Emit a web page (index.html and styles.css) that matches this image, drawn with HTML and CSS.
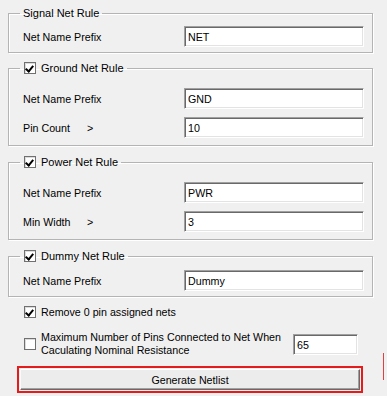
FILE: index.html
```html
<!DOCTYPE html>
<html lang="en">
<head>
    <meta charset="UTF-8">
    <title>Netlist Options</title>
    <link rel="stylesheet" href="styles.css">
</head>
<body>
    <div class="dialog">
        <fieldset class="group group-signal">
            <legend>Signal Net Rule</legend>
            <div class="field">
                <label>Net Name Prefix</label>
                <input type="text" class="text-box" value="NET">
            </div>
        </fieldset>

        <fieldset class="group group-tall">
            <legend><span class="check on"></span>Ground Net Rule</legend>
            <div class="field">
                <label>Net Name Prefix</label>
                <input type="text" class="text-box" value="GND">
            </div>
            <div class="field">
                <label><span class="name">Pin Count</span>&gt;</label>
                <input type="text" class="text-box" value="10">
            </div>
        </fieldset>

        <fieldset class="group group-tall">
            <legend><span class="check on"></span>Power Net Rule</legend>
            <div class="field">
                <label>Net Name Prefix</label>
                <input type="text" class="text-box" value="PWR">
            </div>
            <div class="field">
                <label><span class="name">Min Width</span>&gt;</label>
                <input type="text" class="text-box" value="3">
            </div>
        </fieldset>

        <fieldset class="group group-dummy">
            <legend><span class="check on"></span>Dummy Net Rule</legend>
            <div class="field">
                <label>Net Name Prefix</label>
                <input type="text" class="text-box" value="Dummy">
            </div>
        </fieldset>

        <div class="option">
            <span class="check on"></span>Remove 0 pin assigned nets
        </div>

        <div class="option option-max">
            <span class="check"></span>
            <span class="option-text">Maximum Number of Pins Connected to Net When<br>Caculating Nominal Resistance</span>
            <input type="text" class="text-box small" value="65">
        </div>

        <button class="generate">Generate Netlist</button>
    </div>
    <div class="edge-mark"></div>
</body>
</html>
```

FILE: styles.css
```css
body {
    margin: 0;
    background: #f0f0f0;
    font-family: "Liberation Sans", Arial, sans-serif;
    font-size: 10.7px;
    color: #000;
    width: 387px;
    height: 396px;
    overflow: hidden;
    position: relative;
}

.dialog {
    padding: 6px 14px 0 8px;
    display: flex;
    flex-direction: column;
}

/* group boxes */
.group {
    margin: 9px 0 0;
    padding: 13px 8px 7px 14px;
    border: 1px solid #b4b4b4;
    box-shadow: inset 1px 1px #fff, 1px 1px #fff;
    display: flex;
    flex-direction: column;
    gap: 8px;
}

.group-signal {
    margin-top: 0;
    padding-top: 6px;
    padding-bottom: 5px;
}

.group-signal + .group {
    margin-top: 8px;
}

.group-dummy {
    padding-top: 7px;
    padding-bottom: 5px;
}

.group legend {
    margin-left: -3px;
    padding: 0 3px;
    height: 14px;
    line-height: 14px;
    font-size: 11px;
    display: flex;
    align-items: center;
}

.group legend .check {
    margin: 0 5px 0 1px;
}

.field {
    display: flex;
    justify-content: space-between;
    align-items: center;
    height: 21px;
}

.field label {
    display: flex;
}

.field .name {
    width: 64px;
}

/* sunken edit box */
.text-box {
    box-sizing: border-box;
    width: 180px;
    height: 21px;
    margin: 0;
    padding: 1px 3px 0;
    font: inherit;
    color: #000;
    background: #fff;
    border: 1px solid;
    border-color: #a0a0a0 #fff #fff #a0a0a0;
    box-shadow: inset 1px 1px #696969, inset -1px -1px #e3e3e3;
    outline: none;
}

.text-box.small {
    width: 65px;
}

/* check boxes */
.check {
    box-sizing: border-box;
    width: 12px;
    height: 12px;
    flex: none;
    border: 1px solid #707070;
    background: #fff;
    box-shadow: inset 1px 1px #dcdcdc;
    position: relative;
}

.check.on::after {
    content: "";
    position: absolute;
    left: 2px;
    top: 1px;
    width: 3px;
    height: 6px;
    border: solid #000;
    border-width: 0 2px 2px 0;
    transform: rotate(40deg);
}

.option {
    margin-top: 8px;
    padding-left: 16px;
    height: 14px;
    display: flex;
    align-items: center;
    gap: 5px;
}

.option-max {
    margin-top: 12px;
    height: 26px;
    padding-right: 15px;
}

.option-text {
    flex: 1;
    line-height: 13px;
}

.generate {
    margin: 12px 0 0 12px;
    width: 340px;
    height: 21px;
    font: inherit;
    color: #000;
    background: #ececec;
    border: 1px solid;
    border-color: #fff #696969 #696969 #fff;
    box-shadow: inset -1px -1px #a0a0a0;
    outline: 2px solid #e51c1c;
    outline-offset: 1px;
}

.edge-mark {
    position: absolute;
    left: 383px;
    top: 353px;
    width: 1px;
    height: 27px;
    background: #e04040;
}
```
